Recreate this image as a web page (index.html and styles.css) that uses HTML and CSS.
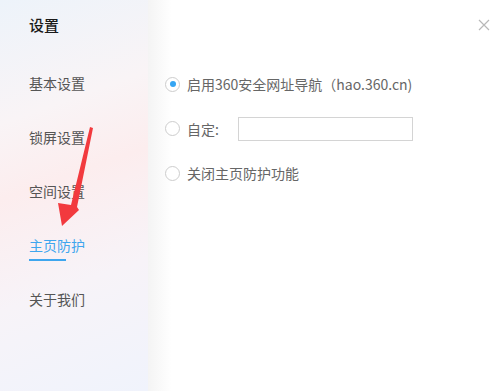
FILE: index.html
```html
<!DOCTYPE html>
<html lang="zh-CN">
<head>
    <meta charset="UTF-8">
    <title>设置</title>
    <link rel="stylesheet" href="styles.css">
</head>
<body>
    <div class="window">
        <aside class="sidebar">
            <h1 class="title">设置</h1>
            <ul class="menu">
                <li>基本设置</li>
                <li>锁屏设置</li>
                <li>空间设置</li>
                <li class="active">主页防护</li>
                <li>关于我们</li>
            </ul>
        </aside>
        <main class="content">
            <div class="option">
                <span class="radio checked"></span>
                <span>启用360安全网址导航（hao.360.cn)</span>
            </div>
            <div class="option">
                <span class="radio"></span>
                <span>自定:</span>
                <input class="url" type="text">
            </div>
            <div class="option">
                <span class="radio"></span>
                <span>关闭主页防护功能</span>
            </div>
        </main>
        <span class="close">
            <svg width="12" height="12" viewBox="0 0 12 12"><path d="M1 1L11 11M11 1L1 11" stroke="#b8b8b8" stroke-width="1.2"/></svg>
        </span>
        <!-- 红色箭头标注 -->
        <svg class="arrow" width="40" height="104" viewBox="54 124 40 104">
            <polygon points="90,127 93,128 77,207 79,210 62,226 58,203 71,205" fill="#f23a3e"/>
        </svg>
    </div>
</body>
</html>
```
FILE: styles.css
```css
body {
    margin: 0;
    font-family: "Noto Sans CJK SC", "Liberation Sans", sans-serif;
}

.window {
    position: relative;
    display: flex;
    width: 500px;
    height: 391px;
    overflow: hidden;
    background-color: #fff;
}

.sidebar {
    width: 148px;
    flex-shrink: 0;
    padding-left: 29px;
    box-sizing: border-box;
    background: linear-gradient(160deg, #edf3fa 0%, #f9f4f6 28%, #fcedee 45%, #f7f3f8 70%, #f0f3fc 100%);
}

.title {
    margin: 14px 0 0;
    font-size: 15px;
    font-weight: 500;
    color: #1a1a1a;
    line-height: 22px;
}

.menu {
    list-style: none;
    margin: 36px 0 0;
    padding: 0;
}

.menu li {
    font-size: 14px;
    color: #555;
    line-height: 22px;
    height: 22px;
    margin-bottom: 32px;
}

.menu li.active {
    color: #3ea6ee;
    position: relative;
}

.menu li.active::after {
    content: "";
    position: absolute;
    left: 0;
    bottom: -5px;
    width: 37px;
    height: 2px;
    background-color: #3ea6ee;
}

.content {
    flex: 1;
    padding: 72px 0 0 17px;
    font-size: 14px;
    color: #666;
    background: linear-gradient(to right, #f4f4f4, #fff 24px);
}

.option {
    display: flex;
    align-items: center;
    height: 24px;
    margin-bottom: 20.5px;
}

.radio {
    width: 15px;
    height: 15px;
    border: 1px solid #cdcdcd;
    border-radius: 50%;
    margin-right: 7px;
    box-sizing: border-box;
    position: relative;
    background: #fff;
}

.radio.checked::after {
    content: "";
    position: absolute;
    left: 3.5px;
    top: 3.5px;
    width: 6px;
    height: 6px;
    border-radius: 50%;
    background-color: #35a5f3;
}

.url {
    width: 175px;
    height: 24px;
    margin-left: 19px;
    border: 1px solid #d4d4d4;
    box-sizing: border-box;
    outline: none;
}

.close {
    position: absolute;
    top: 12px;
    right: 10px;
}

.arrow {
    position: absolute;
    left: 54px;
    top: 124px;
}
```
